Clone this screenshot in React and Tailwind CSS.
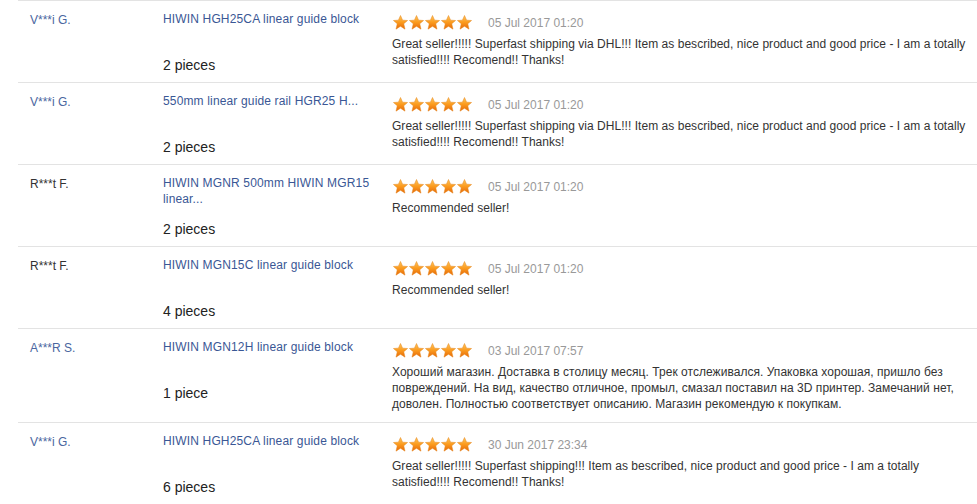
import React from "react";

const rows = [
  {
    name: "V***i G.",
    blue: true,
    product: "HIWIN HGH25CA linear guide block",
    pieces: "2 pieces",
    date: "05 Jul 2017 01:20",
    text: "Great seller!!!!! Superfast shipping via DHL!!! Item as bescribed, nice product and good price - I am a totally satisfied!!!! Recomend!! Thanks!",
  },
  {
    name: "V***i G.",
    blue: true,
    product: "550mm linear guide rail HGR25 H...",
    pieces: "2 pieces",
    date: "05 Jul 2017 01:20",
    text: "Great seller!!!!! Superfast shipping via DHL!!! Item as bescribed, nice product and good price - I am a totally satisfied!!!! Recomend!! Thanks!",
  },
  {
    name: "R***t F.",
    blue: false,
    product: "HIWIN MGNR 500mm HIWIN MGR15 linear...",
    pieces: "2 pieces",
    date: "05 Jul 2017 01:20",
    text: "Recommended seller!",
  },
  {
    name: "R***t F.",
    blue: false,
    product: "HIWIN MGN15C linear guide block",
    pieces: "4 pieces",
    date: "05 Jul 2017 01:20",
    text: "Recommended seller!",
  },
  {
    name: "A***R S.",
    blue: true,
    product: "HIWIN MGN12H linear guide block",
    pieces: "1 piece",
    date: "03 Jul 2017 07:57",
    text: "Хороший магазин. Доставка в столицу месяц. Трек отслеживался. Упаковка хорошая, пришло без повреждений. На вид, качество отличное, промыл, смазал поставил на 3D принтер. Замечаний нет, доволен. Полностью соответствует описанию. Магазин рекомендую к покупкам.",
  },
  {
    name: "V***i G.",
    blue: true,
    product: "HIWIN HGH25CA linear guide block",
    pieces: "6 pieces",
    date: "30 Jun 2017 23:34",
    text: "Great seller!!!!! Superfast shipping!!! Item as bescribed, nice product and good price - I am a totally satisfied!!!! Recomend!! Thanks!",
  },
];

function Star({ id }) {
  return (
    <svg width="15" height="15" viewBox="0 0 24 24" className="block">
      <defs>
        <linearGradient id={id} x1="0" y1="0" x2="0" y2="1">
          <stop offset="0" stopColor="#ffc45a" />
          <stop offset="0.5" stopColor="#fb9b1e" />
          <stop offset="1" stopColor="#e6680a" />
        </linearGradient>
      </defs>
      <polygon
        points="12,0.8 15.3,8.2 23.3,8.8 17.2,14 19.2,22.6 12,18 4.8,22.6 6.8,14 0.7,8.8 8.7,8.2"
        fill={`url(#${id})`}
        stroke="#e4861a"
        strokeWidth="0.8"
        strokeLinejoin="round"
      />
    </svg>
  );
}

function Stars({ idx }) {
  return (
    <div className="flex gap-px pl-px">
      {[0, 1, 2, 3, 4].map((i) => (
        <Star key={i} id={`g${idx}-${i}`} />
      ))}
    </div>
  );
}

export default function App() {
  return (
    <div
      className="w-[977px] h-[504px] overflow-hidden bg-white pl-[18px]"
      style={{ fontFamily: '"Liberation Sans", Arial, sans-serif' }}
    >
      {rows.map((r, idx) => (
        <div
          key={idx}
          className="flex border-t border-[#e3e3e3] pt-[10px] pb-[7px]"
        >
          <div
            className={`w-[145px] shrink-0 pl-3 pt-px text-[12px] leading-4 ${
              r.blue ? "text-[#4a66a0]" : "text-[#333]"
            }`}
          >
            {r.name}
          </div>
          <div className="w-[229px] shrink-0 pr-4">
            <div className="h-8 text-[12px] leading-4 tracking-[0.15px] text-[#3a5795]">
              {r.product}
            </div>
            <div className="mt-3 text-[14px] leading-5 text-[#222]">
              {r.pieces}
            </div>
          </div>
          <div className="flex-1 pr-2 pb-[3px]">
            <div className="flex items-center h-5 pt-[2px]">
              <Stars idx={idx} />
              <span className="ml-[16px] text-[12px] text-[#999] pt-[2px]">
                {r.date}
              </span>
            </div>
            <div className="mt-[5px] text-[12px] leading-4 tracking-[0.04px] text-[#333]">
              {r.text}
            </div>
          </div>
        </div>
      ))}
    </div>
  );
}
